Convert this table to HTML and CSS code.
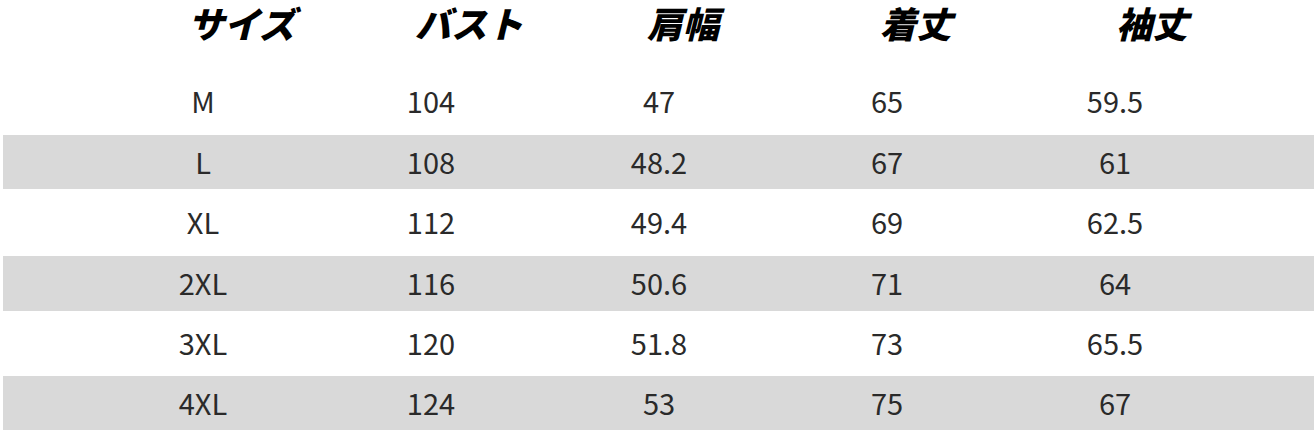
FILE: index.html
```html
<!DOCTYPE html>
<html lang="ja">
<head>
<meta charset="utf-8">
<title>サイズ表</title>
<link rel="stylesheet" href="styles.css">
</head>
<body>
<div class="sheet">
  <div class="head">
    <div class="hcell">サイズ</div>
    <div class="hcell">バスト</div>
    <div class="hcell">肩幅</div>
    <div class="hcell">着丈</div>
    <div class="hcell">袖丈</div>
  </div>
  <div class="row r1"><div class="cell">M</div><div class="cell">104</div><div class="cell">47</div><div class="cell">65</div><div class="cell">59.5</div></div>
  <div class="row r2 band"><div class="cell">L</div><div class="cell">108</div><div class="cell">48.2</div><div class="cell">67</div><div class="cell">61</div></div>
  <div class="row r3"><div class="cell">XL</div><div class="cell">112</div><div class="cell">49.4</div><div class="cell">69</div><div class="cell">62.5</div></div>
  <div class="row r4 band"><div class="cell">2XL</div><div class="cell">116</div><div class="cell">50.6</div><div class="cell">71</div><div class="cell">64</div></div>
  <div class="row r5"><div class="cell">3XL</div><div class="cell">120</div><div class="cell">51.8</div><div class="cell">73</div><div class="cell">65.5</div></div>
  <div class="row r6 band"><div class="cell">4XL</div><div class="cell">124</div><div class="cell">53</div><div class="cell">75</div><div class="cell">67</div></div>
</div>
</body>
</html>
```
FILE: styles.css
```css
html, body {
  margin: 0;
  padding: 0;
  background: #ffffff;
}

.sheet {
  width: 1314px;
  height: 433px;
  display: flex;
  flex-direction: column;
  font-family: "Noto Sans CJK JP", "Noto Sans", sans-serif;
}

.head {
  height: 68px;
  display: grid;
  grid-template-columns: 227px 228px 200px 266px 206px;
  padding-left: 128px;
  align-items: start;
}

.hcell {
  text-align: center;
  font-size: 36px;
  line-height: 52px;
  margin-top: -4px;
  font-weight: 900;
  font-style: italic;
  color: #000000;
}

.row {
  display: grid;
  grid-template-columns: repeat(5, 228px);
  padding-left: 89px;
  padding-bottom: 3px;
  box-sizing: border-box;
  align-items: center;
}

.band {
  background: #d9d9d9;
  margin-left: 3px;
  padding-left: 86px;
}

.r1 { height: 67px; }
.r2 { height: 54px; }
.r3 { height: 67px; }
.r4 { height: 55px; }
.r5 { height: 65px; }
.r6 { height: 54px; }

.cell {
  text-align: center;
  font-size: 29px;
  line-height: 42px;
  color: #2a2a2a;
}
```
